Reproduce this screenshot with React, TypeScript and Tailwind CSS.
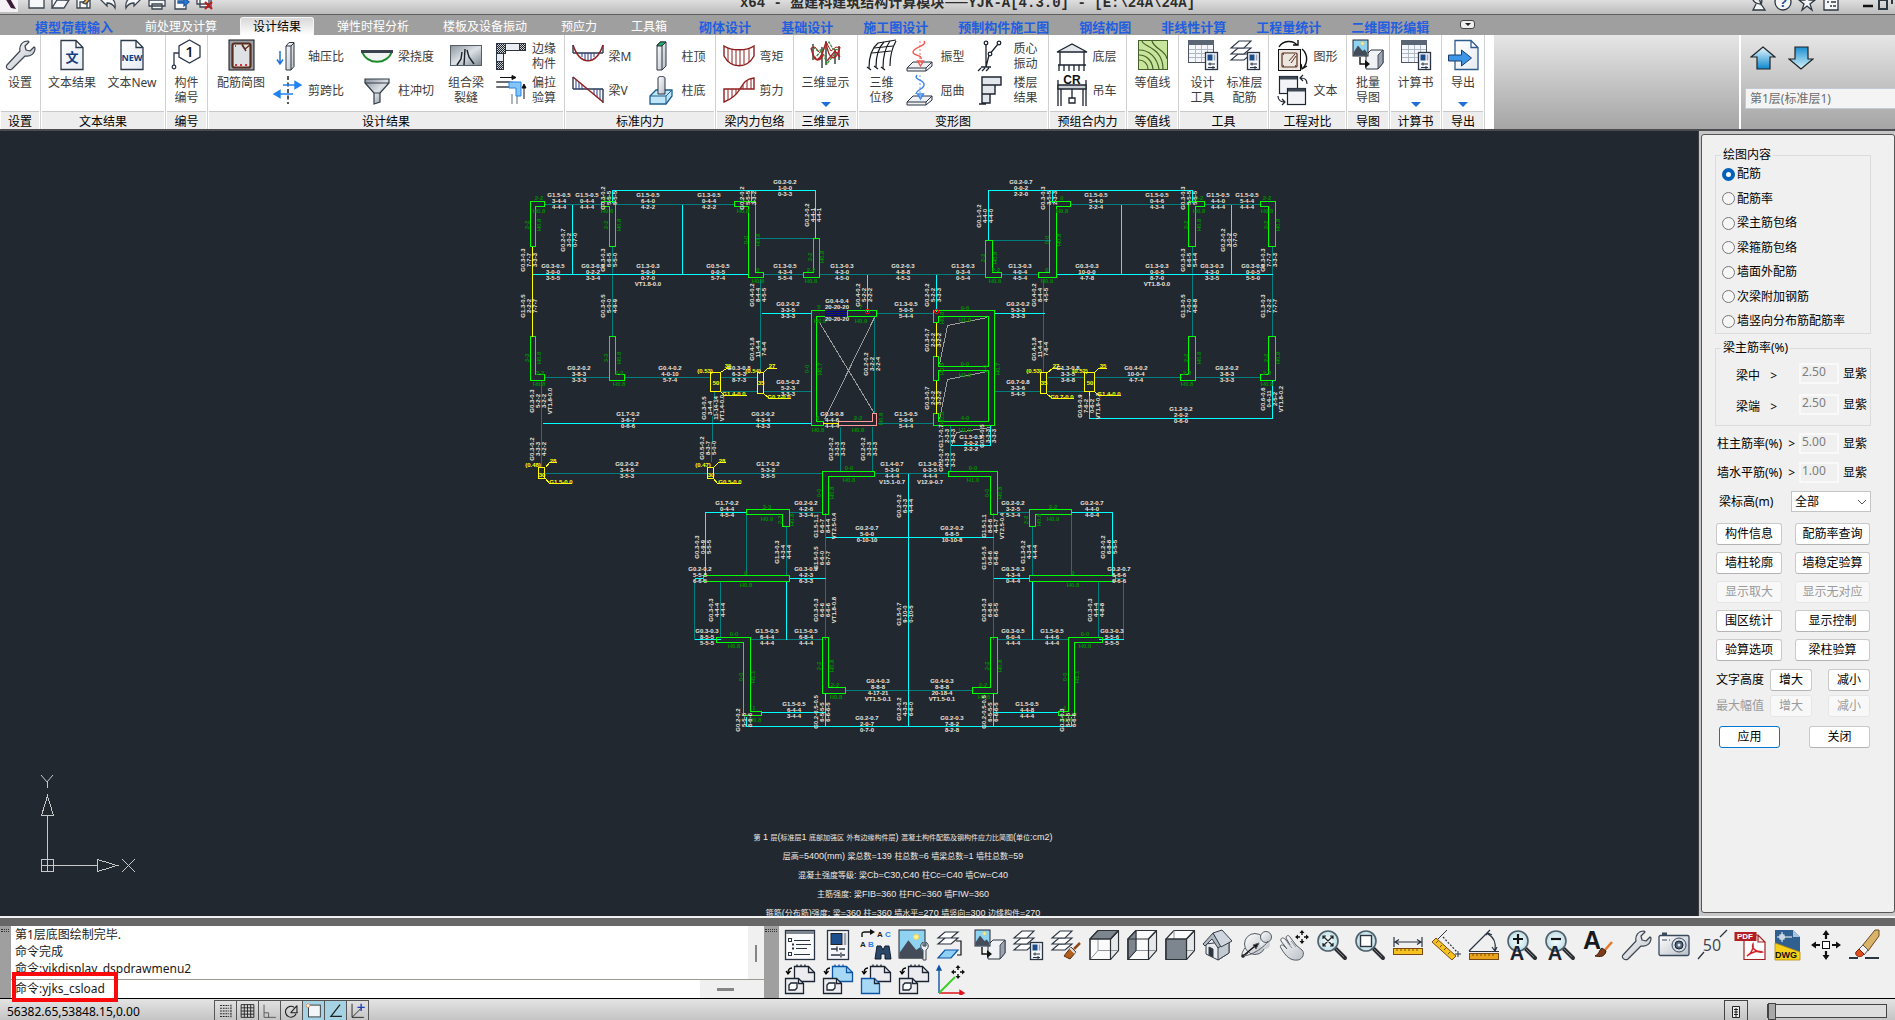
import React, { useState } from 'react';

const INK = '#1b2430';

/* ---------- shared icon parts ---------- */

const Sheet = () => (
  <path d="M5 1.5h15l7 7v22H5z M20 1.5v7h7" fill="url(#paper)" stroke="#2d3a4c" strokeWidth="1.3" />
);

const Layers = () => (
  <g fill="#fff" stroke="#2a3442" strokeWidth="1.1">
    <path d="M2 21l7-6h13l-7 6z" />
    <path d="M2 15l7-6h13l-7 6z" />
    <path d="M2 9l8-7h12l-7 7z" />
  </g>
);

const MiniCard = () => (
  <g>
    <rect x="18.5" y="13.5" width="12" height="17" fill="#f4f6fa" stroke="#2a3442" strokeWidth="1.3" />
    <rect x="20.5" y="15.5" width="5" height="6" fill="#1b4d8c" />
    <path d="M27.5 15.5v6" stroke="#9aa3ae" strokeWidth="1.5" />
    <path d="M21 25h7M23 23.500v3M21 28.500h7M26 27v3" stroke="#2a3442" />
  </g>
);

const Magnifier = ({ children }: { children?: React.ReactNode }) => (
  <g>
    <path d="M20 20l9 9" stroke="#2c2f33" strokeWidth="4" strokeLinecap="round" />
    <path d="M20 20l8 8" stroke="#777c82" strokeWidth="1" />
    <circle cx="12" cy="12" r="10" fill="url(#lens)" stroke="#51606c" strokeWidth="1.6" />
    {children}
  </g>
);

const Cube = ({ face }: { face: 'top' | 'left' | 'front' }) => (
  <g stroke="#2d3237" strokeWidth="1.1" strokeLinejoin="round">
    <path d="M2 10l8-8.500h20.500v20l-8 9H2z" fill="#fbfbfc" />
    <path d="M22.500 10l8-8.500v20l-8 9z" fill="#e6e8ea" />
    <path d="M10 1.500v20M10 21.500h20M10 21.500l-8 9" stroke="#8d9399" fill="none" strokeWidth="1" />
    {face === 'top' && <path d="M2 10l8-8.500h20.500l-8 8.500z" fill="#7d858e" />}
    {face === 'left' && <path d="M2 10l8-8.500v20l-8 9z" fill="#7d858e" />}
    {face === 'front' && <path d="M2 10h20.500v20.500H2z" fill="#7d858e" />}
    <path d="M2 10h20.500v20.500H2zM22.500 10l8-8.500" fill="none" />
  </g>
);

const Viewport = ({ back, front }: { back: string; front: string }) => (
  <g strokeWidth="1.3">
    <path d="M10.500 3.500h14l6 6v9h-20z" fill={back} stroke={back === '#a7d8f5' ? '#0d55a5' : INK} />
    <path d="M24.500 3.500v6h6M13 1.500v2M17 1.500v2M21 1.500v2" fill="none" stroke={back === '#a7d8f5' ? '#0d55a5' : INK} />
    <path d="M1.500 15.500h13l5 5v10h-18z" fill={front} stroke={front === '#a7d8f5' ? '#0d55a5' : INK} />
    <path d="M14.500 15.500v5h5" fill="none" stroke={INK} />
    {front !== '#a7d8f5' && <path d="M5 22l2-2h6v5l-2 2H5z" fill="#fff" stroke={INK} />}
    <path d="M8 5c-3 0-4 2-4 5M2 8l2 3 2.500-3" fill="none" stroke="#000" />
  </g>
);

const MoveArrows = ({ x, y }: { x: number; y: number }) => (
  <g transform={`translate(${x} ${y})`} stroke="#111" fill="#111">
    <path d="M0-5V-2M0 5V2M-5 0H-2M5 0H2" strokeWidth="1.4" />
    <path d="M0-7l2.500 3h-5zM0 7l2.500-3h-5zM-7 0l3-2.500v5zM7 0l-3-2.500v5z" stroke="none" />
  </g>
);

const Landscape = ({ w, h }: { w: number; h: number }) => (
  <g>
    <rect x="1" y="1" width={w} height={h} fill="#8fd3f3" stroke="#20272f" />
    <circle cx={w * 0.7} cy={h * 0.28} r={w * 0.1} fill="#fff3a0" stroke="#f8d34c" />
    <path d={`M1.500 ${h * 0.85}L${w * 0.4} ${h * 0.4}l${w * 0.3} ${h * 0.35} ${w * 0.15}-${h * 0.1} ${w * 0.15} ${h * 0.2}v${h * 0.2}H1.500z`} fill="#434c58" />
  </g>
);

const icons: Record<string, React.ReactNode> = {
  wrench: (
    <path d="M3 26l13-14c-1-5 2-10 8-10l1 1-4 4 1 4 4 1 4-4 1 1c0 6-5 9-10 8L8 30c-3 2-7-1-5-4z" fill="url(#steel)" stroke="#3b444f" strokeWidth="1.2" strokeLinejoin="round" />
  ),
  textDoc: (
    <g>
      <Sheet />
      <text x="16" y="23" textAnchor="middle" fontSize="13" fontWeight="700" fill="#123d80" fontFamily="Noto Sans CJK SC, sans-serif">文</text>
    </g>
  ),
  newDoc: (
    <g>
      <Sheet />
      <text x="16" y="22" textAnchor="middle" fontSize="9" fontWeight="700" fill="#123d80" fontFamily="Open Sans, sans-serif">NEW</text>
    </g>
  ),
  hexNumber: (
    <g fill="none" stroke="#2d3a4c" strokeWidth="1.300">
      <path d="M18.500 1l10.500 6v11l-10.500 6L8 18V7z" fill="#fff" />
      <path d="M8 14H3v12" />
      <circle cx="3" cy="28" r="1.800" fill="#fff" />
      <text x="18.500" y="18" textAnchor="middle" fontSize="15" fontWeight="600" fill="#111" stroke="none" fontFamily="Open Sans, sans-serif">1</text>
    </g>
  ),
  rebar: (
    <g>
      <rect x="4" y="1" width="25" height="30" fill="#99a0a8" stroke="#111" />
      <rect x="7.500" y="4.500" width="18" height="24" rx="2" fill="#dfe2e5" stroke="#5a2d1c" strokeWidth="2.200" />
      <path d="M17 5l3 5 5-4M17 6l4 6" stroke="#5a2d1c" fill="none" strokeWidth="1.400" />
      <path d="M10 26h2M15 26h2M20 26h2M10 7h1" stroke="#d33" strokeWidth="2" />
    </g>
  ),
  axial: (
    <g>
      <path d="M15 6l3-3.500h5v24l-3 3.500h-5z" fill="url(#steel)" stroke="#2a3442" />
      <path d="M20 6v24M15 6h5l3-3" fill="none" stroke="#2a3442" />
      <path d="M9 11v12M6 19.500L9 24l3-4.500" stroke="#1f74d6" strokeWidth="1.500" fill="none" />
    </g>
  ),
  shear: (
    <g>
      <path d="M17 2v28" stroke="#222" strokeWidth="1.500" strokeDasharray="4 2.500" />
      <path d="M12 11h16M30 11l-6-3.500v7zM22 20H7M3 20l6-3.500v7z" stroke="#1f82ef" strokeWidth="1.400" fill="#1f82ef" />
    </g>
  ),
  deflect: (
    <g fill="none">
      <path d="M1 12c6 13 24 13 30 0" stroke="#1c8b2b" strokeWidth="1.800" fill="#f0f4f0" />
      <path d="M0 11.500h32" stroke="#3a424d" strokeWidth="3" />
    </g>
  ),
  punch: (
    <path d="M4 5h24v4L19 19v9l-6 2V19L4 9zM4 9h24M13 19h6" fill="url(#steelDark)" stroke="#333c46" strokeWidth="1.200" />
  ),
  crack: (
    <g>
      <rect x="0.500" y="6.500" width="31" height="20" fill="url(#steelDark)" stroke="#555e69" />
      <path d="M7 26l4-6 1-7M14 26l1-16M24 25l-5-7-2-7" fill="none" stroke="#1a2129" strokeWidth="1.400" />
    </g>
  ),
  edge: (
    <g stroke="#2a3442">
      <rect x="1.500" y="3.500" width="29" height="7" fill="#e9edf2" />
      <rect x="1.500" y="3.500" width="7" height="26" fill="#e9edf2" />
      <rect x="1.500" y="3.500" width="9" height="10" fill="url(#hatch)" />
      <rect x="24.500" y="3.500" width="6" height="7" fill="url(#hatch)" />
      <rect x="1.500" y="21.500" width="7" height="8" fill="url(#hatch)" />
    </g>
  ),
  tension: (
    <g fill="none">
      <path d="M2 8h16v0M2 13h12M22 30V20M17 30V20" stroke="#9aa3ad" strokeWidth="1.600" />
      <path d="M1 8h14M1 13h13" stroke="#222" />
      <path d="M14 8h12v14h-5v-8h-7z" fill="#86c6f4" stroke="#1f82ef" />
      <path d="M5 3.500h16M17 1.500l4 2-4 2zM29 25V11M27 14l2-4 2 4z" stroke="#111" fill="#111" />
    </g>
  ),
  beamM: (
    <g fill="none">
      <path d="M1 5v8M31 5v8M1 13h30" stroke="#2b3a55" strokeWidth="1.400" />
      <path d="M10 13v4M13 13v7M16 13v8M19 13v7M22 13v4" stroke="#2b3a8a" />
      <path d="M1 5c7 21 23 21 30 0" stroke="#8f1f1f" strokeWidth="1.500" />
    </g>
  ),
  beamV: (
    <g fill="none">
      <path d="M1 3v12M31 15v14M1 15h30" stroke="#2b3a55" strokeWidth="1.400" />
      <path d="M4 6v9M7 8v7M10 10v5M22 15v6M25 15v8M28 15v11" stroke="#2b3a8a" />
      <path d="M1 3l30 25" stroke="#8f1f1f" strokeWidth="1.500" />
    </g>
  ),
  colTop: (
    <g stroke="#2a3442">
      <path d="M12 5l3-3h6v24l-4 4h-5z" fill="url(#steel)" />
      <path d="M12 6l3-4h6l-4 4z" fill="#23a867" />
      <path d="M17 6v24" />
    </g>
  ),
  colBot: (
    <g stroke="#1d5f8f">
      <path d="M5 22l6-6h16v6l-6 8H5z" fill="#bfe6f8" strokeWidth="1.300" />
      <path d="M5 22h16l6-6M21 22v8" fill="none" />
      <path d="M13 4c0-2 7-2 7 0v16h-7z" fill="url(#steel)" stroke="#2a3442" />
    </g>
  ),
  moment: (
    <g fill="none" stroke="#8f1f1f" strokeWidth="1.400">
      <path d="M1 6c7 5 23 5 30 0v10c-7 13-23 13-30 0z" />
      <path d="M5 8v14M9 9v15M13 10v15M17 10v16M21 9v15M26 8v14" strokeWidth="1" />
    </g>
  ),
  shearForce: (
    <g fill="none" stroke="#8f1f1f" strokeWidth="1.400">
      <path d="M1 15h30V4c-9 1-11 6-14 11S9 25 1 28z" />
      <path d="M5 15v11M9 15v9M13 15v5M20 11v4M24 7v8M28 5v10" strokeWidth="1" />
    </g>
  ),
  threeD: (
    <g fill="none">
      <path d="M3 5v16M12 8v21M16 2v24M29 7v14M25 10v15" stroke="#1d2a22" strokeWidth="1.300" />
      <path d="M3 8l5 4 5-2 6-7 4 7 6 1M4 20l8-9 5 14 9-12" stroke="#2f8a3a" strokeWidth="1.200" strokeDasharray="3 1" />
      <path d="M1 9c4 16 9 16 15-6 3 20 10 20 14 5M3 16c3 8 8 5 10 0M17 22l8-10 5 6" stroke="#a82222" strokeWidth="1.400" />
      <path d="M1 9l4-1 4 5M16 3l5 9 5-4 4 1" stroke="#a82222" />
    </g>
  ),
  displacement: (
    <g fill="none" stroke="#15191d" strokeWidth="1.200">
      <path d="M3 29C3 18 6 9 12 4M10 28c0-12 3-20 8-25M17 29c0-12 2-20 7-27M24 27c0-10 2-18 6-25" />
      <path d="M12 4l18-3M8 9l19-2M6 14l19-2M1 28l4 3M8 27l4 3M15 28l4 3" />
    </g>
  ),
  vibration: (
    <g fill="none">
      <path d="M3 28l6-6h19l-6 6zM3 28v3h19v-3M22 31l6-5v-4" fill="#eef0f3" stroke="#2a3442" />
      <path d="M16 1v24" stroke="#f19a92" strokeDasharray="2 2" strokeWidth="1.400" />
      <path d="M20 1c4 5-11 6-11 11 0 4 10 3 8 7M13.500 21l3 5 3-5z" stroke="#ee5a50" fill="none" strokeWidth="1.400" />
    </g>
  ),
  buckling: (
    <g fill="none">
      <path d="M3 28l6-6h19l-6 6zM3 28v3h19v-3M22 31l6-5v-4" fill="#eef0f3" stroke="#2a3442" />
      <path d="M16 1v24" stroke="#8fbcf5" strokeDasharray="2 2" strokeWidth="1.400" />
      <path d="M13 1c-4 5 8 5 7 10 0 4-8 5-8 9M13.500 20l3 5 3-5z" stroke="#3b86ea" fill="none" strokeWidth="1.400" />
    </g>
  ),
  mass: (
    <g fill="none" stroke="#1c2430" strokeWidth="1.300">
      <path d="M9 3v24M9 27l3-12 9-11M4 27h10M5 31l3-3M9 31l3-3M1 31l3-3" />
      <circle cx="9" cy="3" r="1.800" fill="#fff" /><circle cx="13" cy="14" r="1.800" fill="#fff" /><circle cx="22" cy="3" r="1.800" fill="#fff" />
    </g>
  ),
  storey: (
    <g fill="#e3e6ea" stroke="#1c2430" strokeWidth="1.400">
      <path d="M5 3h19v8H5zM5 11h13v9H5zM5 20h8v9H5M5 3v27M2 30h7" />
    </g>
  ),
  baseLoad: (
    <g fill="none" stroke="#1c2430" strokeWidth="1.300">
      <path d="M1 12L16 4l15 8zM4 12v13M28 12v13M2 25h28" fill="#e3e6ea" />
      <path d="M3 25v6M8 25v6M13 25v6M18 25v6M23 25v6M28 25v6" />
    </g>
  ),
  crane: (
    <g fill="none" stroke="#1c2430" strokeWidth="1.300">
      <path d="M2 6v26M5 13v19M30 6v26M27 13v19" />
      <path d="M2 11h28v4H2z" fill="#c9ced4" />
      <path d="M16 15v9M13 24h6v5h-6z" />
      <text x="16" y="10" textAnchor="middle" fontSize="12" fontWeight="700" fill="#111" stroke="none" fontFamily="Liberation Sans, sans-serif">CR</text>
    </g>
  ),
  contour: (
    <g>
      <rect x="1.500" y="1.500" width="29" height="29" fill="#c7e59b" stroke="#47612b" />
      <path d="M2 21c5 0 9 4 9 9M2 16c8 0 13 6 14 14M2 11c11 0 18 8 20 19M5 2c1 6 21 6 21 28M15 2c2 8 14 9 15 18" fill="none" stroke="#47612b" strokeWidth="1.200" />
    </g>
  ),
  tableCard: (
    <g>
      <rect x="1.500" y="1.500" width="25" height="22" fill="#f5f7fa" stroke="#4d5763" />
      <rect x="1" y="1" width="26" height="5" fill="#5b6675" />
      <path d="M2 10.500h24M2 14.500h24M2 18.500h24M8.500 6v17M14.500 6v17M20.500 6v17" stroke="#aeb9c6" />
      <MiniCard />
    </g>
  ),
  layersCard: <g><Layers /><MiniCard /></g>,
  compareShape: (
    <g>
      <rect x="1.500" y="9.500" width="22" height="21" fill="#ebe6df" stroke="#111" />
      <rect x="5" y="13" width="15" height="14" rx="1" fill="none" stroke="#5a2d1c" strokeWidth="1.200" />
      <path d="M12 21l6-7M14 23l5-7" stroke="#5a2d1c" />
      <path d="M6 14h1M6 26h1M18 26h1" stroke="#c22" strokeWidth="2" />
      <path d="M2 7C6 0 16 0 20 5M16 5h5V0M25 9c6 5 6 14 1 19M30 26l-5 3-1-5" fill="none" stroke="#111" strokeWidth="1.400" />
    </g>
  ),
  compareText: (
    <g stroke="#1c2430" strokeWidth="1.200">
      <rect x="2.500" y="2.500" width="18" height="17" fill="#f2f3f6" />
      <path d="M3 4h17" stroke="#3c4654" strokeWidth="3" />
      <rect x="10.500" y="14.500" width="18" height="16" fill="#f2f3f6" />
      <path d="M11 16h17" stroke="#3c4654" strokeWidth="3" />
      <path d="M30 10c0-4-2-6-6-6M26 1l-3 3 3 3M1 22c0 3 2 6 6 6M5 25l3 3-3 3" fill="none" />
    </g>
  ),
  pictureCube: (
    <g>
      <path d="M14 16l5-5h12v13l-5 6H14z" fill="#f0f2f5" stroke="#2a3442" />
      <path d="M26 16l5-5v13l-5 6z" fill="#9ba3ad" stroke="#2a3442" strokeWidth="0.800" />
      <Landscape w={15} h={16} />
      <path d="M8 18v7h7" fill="none" stroke="#111" strokeWidth="1.400" />
      <path d="M13 21l5 4-5 4z" fill="#111" />
    </g>
  ),
  exportDoc: (
    <g>
      <path d="M8 1.500h16l7 7v22H8z M24 1.500v7h7" fill="url(#paper)" stroke="#2d5d8c" strokeWidth="1.300" />
      <path d="M1.500 16h13v-5l10 8-10 8v-5h-13z" fill="#3d95e8" stroke="#17406f" />
    </g>
  ),
  list: (
    <g stroke="#2a3442">
      <rect x="1.500" y="1.500" width="29" height="29" fill="#fafbfc" strokeWidth="1.300" />
      <rect x="2" y="2" width="28" height="3" fill="#7d868f" stroke="none" />
      <rect x="4.500" y="9.500" width="3" height="3" fill="#fff" /><rect x="4.500" y="23.500" width="3" height="3" fill="#fff" />
      <path d="M10 11.500h16M12 15.500h15M12 19.500h11M10 25.500h16" /><path d="M8 15.500h2M8 19.500h2" strokeWidth="2" />
    </g>
  ),
  card: (
    <g>
      <rect x="5.500" y="1.500" width="21" height="29" fill="#f4f6fa" stroke="#2a3442" strokeWidth="1.300" />
      <rect x="9" y="4.500" width="11" height="11" fill="#1d4f8f" stroke="#222" />
      <path d="M23 4v12" stroke="#9aa3ae" strokeWidth="2.500" />
      <path d="M9 20h6M17 20h6M15 17.500v5M9 26h9M20 26h3M19 23.500v5" stroke="#2a3442" strokeWidth="1.300" />
    </g>
  ),
  find: (
    <g>
      <path d="M2 8V5c0-2 1-2 3-2h6" fill="none" stroke="#111" strokeWidth="1.400" /><path d="M10 0l5 3-5 3z" fill="#111" />
      <g fontSize="8" fontWeight="700" fontFamily="Liberation Sans, sans-serif">
        <text x="17" y="8" fill="#222">A</text><text x="25" y="8" fill="#1f82ef">C</text>
        <text x="0" y="18" fill="#222">A</text><text x="8" y="18" fill="#1f82ef">B</text>
      </g>
      <path d="M15 30l2-13h4l2 4 2-4h4l2 13h-6v-5h-4v5z" fill="#2c4869" stroke="#0f1c2c" />
    </g>
  ),
  pictureWrench: (
    <g>
      <Landscape w={26} h={28} />
      <path d="M25 31V21c-3-2-3-6 0-8v4h3v-4c3 2 3 6 0 8v10z" fill="#e8ebef" stroke="#3b444f" />
    </g>
  ),
  layerMove: (
    <g fill="#fff" stroke="#2a3442" strokeWidth="1.200">
      <path d="M2 15l7-6h13l-7 6zM2 9l7-6h13l-7 6z" />
      <path d="M2 29l7-8h13l-7 8z" fill="#8fd0f5" stroke="#0d55a5" />
      <path d="M20 12h5v14h-4" fill="none" stroke="#111" />
    </g>
  ),
  layerBrush: (
    <g>
      <Layers />
      <path d="M30 14l-6 6" stroke="#8f4a1c" strokeWidth="2.500" />
      <path d="M21 18l5 5-6 7-6-3z" fill="#b2611e" stroke="#5a2d0c" />
      <path d="M20 19l5 5" stroke="#dbe0e6" strokeWidth="2" />
    </g>
  ),
  cubeTop: <Cube face="top" />,
  cubeLeft: <Cube face="left" />,
  cubeFront: <Cube face="front" />,
  house: (
    <g stroke="#353d47" strokeLinejoin="round">
      <path d="M4 15v10l12 6 11-7V12z" fill="#e9ecef" />
      <path d="M16 18v13l11-7V12z" fill="#c4cad1" />
      <path d="M1 15L11 4l8 13-3 2-6-9-7 7z" fill="#aeb6bf" />
      <path d="M11 4l9-3 10 11-11 6z" fill="#cfd6dd" />
      <path d="M7 18l4 2v8l-4-2z" fill="#2c3540" />
    </g>
  ),
  orbit: (
    <g fill="url(#steel)" stroke="#565d64">
      <path d="M8 24C3 30-1 27 5 19" fill="none" />
      <circle cx="15" cy="15" r="10.500" /><circle cx="25" cy="15" r="5" stroke="none" /><circle cx="26" cy="8" r="5.500" />
      <path d="M3 27c8 0 22-9 25-15" fill="none" />
      <path d="M3 27l12-10" stroke="#111" strokeWidth="1.500" /><path d="M19 14l-6 2 3 4z" fill="#111" />
      <circle cx="3" cy="27" r="1.500" fill="#111" />
    </g>
  ),
  pan: (
    <g>
      <path d="M3 19c-2-3 1-4 3-2l3 3-6-8c-1-3 2-4 4-2l5 6-4-7c0-3 3-3 4-1l6 8 6 5c3 3 1 9-4 10-7 1-12-3-17-12z" fill="url(#steel)" stroke="#565d64" />
      <path d="M9 13l5 6M13 12l5 6" stroke="#8b9198" fill="none" />
      <MoveArrows x={24} y={8} />
    </g>
  ),
  zoomAll: <Magnifier><path d="M7 7l10 10M17 7L7 17M7 10V7h3M14 7h3v3M17 14v3h-3M10 17H7v-3" fill="none" stroke="#222" strokeWidth="1.200" /></Magnifier>,
  zoomWindow: <Magnifier><rect x="6.500" y="6.500" width="11" height="11" fill="#fff" stroke="#2b3440" strokeWidth="1.400" /></Magnifier>,
  ruler: (
    <g>
      <path d="M2 8v10M30 8v10M3 13h26M7 10.500L3 13l4 2.500M25 10.500l4 2.500-4 2.500" stroke="#2a3442" fill="none" strokeWidth="1.200" />
      <rect x="1.500" y="19.500" width="29" height="6" fill="#f4c320" stroke="#7a4a12" />
      <path d="M5 20v2M9 20v2M13 20v2M17 20v2M21 20v2M25 20v2" stroke="#7a4a12" />
    </g>
  ),
  rulerDiagonal: (
    <g>
      <path d="M13 8l14 15" stroke="#2a3442" strokeWidth="1.200" strokeDasharray="2 1.500" fill="none" /><path d="M28 22v6M25 25h6M8 10L17 1" stroke="#2a3442" />
      <path d="M2 13l4-4 20 18-4 4z" fill="#f4c320" stroke="#7a4a12" />
      <path d="M8 12l-2 2M12 16l-2 2M16 19l-2 2M20 23l-2 2" stroke="#7a4a12" />
    </g>
  ),
  angle: (
    <g>
      <path d="M1 22.500h30M1 22L22 1M20 5c7 4 8 10 7 16M18 6l2-2 4 2M24 18l3 4 2-4" stroke="#2a3442" fill="none" strokeWidth="1.200" />
      <rect x="1.500" y="24.500" width="29" height="6" fill="#eaa51e" stroke="#7a4a12" />
      <path d="M5 25v2M9 25v2M13 25v2M17 25v2M21 25v2M25 25v2" stroke="#7a4a12" />
    </g>
  ),
  textBigger: (
    <Magnifier>
      <path d="M12 5v10M7 10h10" stroke="#111" strokeWidth="2.200" />
      <text x="11" y="31" textAnchor="middle" fontSize="20" fontWeight="700" fill={INK} fontFamily="Liberation Sans, sans-serif">A</text>
    </Magnifier>
  ),
  textSmaller: (
    <Magnifier>
      <path d="M7 10h10" stroke="#111" strokeWidth="2.200" />
      <text x="11" y="31" textAnchor="middle" fontSize="20" fontWeight="700" fill={INK} fontFamily="Liberation Sans, sans-serif">A</text>
    </Magnifier>
  ),
  textStyle: (
    <g>
      <text x="10" y="20" textAnchor="middle" fontSize="25" fontWeight="700" fill="#161a1f" fontFamily="Liberation Sans, sans-serif">A</text>
      <path d="M30 13l-7 8" stroke="#e37a2c" strokeWidth="2.500" />
      <path d="M20 19l4 3c-1 6-6 6-11 5 4-1 4-6 7-8z" fill="#7e3d1a" stroke="#3a1b08" />
    </g>
  ),
  camera: (
    <g>
      <rect x="1" y="6.500" width="30" height="20" rx="1.500" fill="url(#steel)" stroke="#38495c" strokeWidth="1.300" />
      <path d="M4 5h5" stroke="#38495c" strokeWidth="3" />
      <circle cx="21" cy="16" r="7" fill="#d5dbe2" stroke="#38495c" />
      <circle cx="21" cy="16" r="4" fill="#55677c" stroke="#18222e" />
      <circle cx="21" cy="16" r="1.500" fill="#dfe9f5" />
      <path d="M4 11h5M11 11h1" stroke="#38495c" />
    </g>
  ),
  fifty: (
    <g>
      <path d="M2 30l6-7M24 8l7-7" stroke="#2a3442" strokeWidth="1.300" />
      <text x="16" y="22" textAnchor="middle" fontSize="16" fill="#39424e" fontFamily="Open Sans, sans-serif">50</text>
    </g>
  ),
  pdf: (
    <g>
      <path d="M10 6h14l7 7v17.500H10z M24 6v7h7" fill="#fff" stroke="#a02020" strokeWidth="1.200" />
      <path d="M0.500 3h22v9h-22z" fill="#b11f24" />
      <text x="11" y="10" textAnchor="middle" fontSize="8" fontWeight="700" fill="#fff" fontFamily="Liberation Sans, sans-serif">PDF</text>
      <path d="M13 27c4-2 7-8 6-12-2 4 4 9 9 8-5-2-11 1-15 4z" fill="none" stroke="#d3232a" strokeWidth="1.500" />
    </g>
  ),
  dwg: (
    <g>
      <path d="M3 1h18l7 7v22H3z" fill="#2f6090" />
      <path d="M21 1v7h7z" fill="#a9c4de" />
      <path d="M3 14l25 9v8H3z" fill="#f8d01c" stroke="#b58a0b" strokeWidth="0.800" />
      <path d="M10 3v10M5 8h15" stroke="#fff" /><rect x="8" y="6" width="4" height="4" fill="none" stroke="#fff" />
      <text x="14" y="29" textAnchor="middle" fontSize="9" fontWeight="700" fill="#111" fontFamily="Liberation Sans, sans-serif">DWG</text>
    </g>
  ),
  move: (
    <g stroke="#111" fill="#111">
      <path d="M16 10V5M16 22v5M10 16H5M22 16h5" strokeWidth="2.200" />
      <path d="M16 1l3.500 5h-7zM16 31l3.500-5h-7zM1 16l5-3.500v7zM31 16l-5-3.500v7z" stroke="none" />
      <rect x="12.500" y="12.500" width="7" height="7" fill="#fff" />
    </g>
  ),
  eraser: (
    <g>
      <path d="M1 29h9M17 29h14" stroke="#2e3640" strokeWidth="2.200" />
      <path d="M14 17L27 1h4v6L20 22z" fill="#d9b36a" stroke="#6a4a1c" />
      <path d="M11 20l4-4 5 5-4 5z" fill="#f3f3f3" stroke="#555" />
      <path d="M11 20l5 5c-3 5-10 2-8-2z" fill="#e04e1c" stroke="#7a2408" />
    </g>
  ),
  viewA: <Viewport back="#ececf0" front="#ececf0" />,
  viewB: <Viewport back="#a7d8f5" front="#ececf0" />,
  viewC: <Viewport back="#ececf0" front="#a7d8f5" />,
  ucs: (
    <g>
      <path d="M3 30V6M3 3l-2 4h4z" stroke="#0d55a5" fill="#0d55a5" strokeWidth="1.400" />
      <path d="M3 30h22M28 30l-4-2.500v5z" stroke="#e0141c" fill="#e0141c" strokeWidth="1.400" />
      <path d="M3 30l16-16" stroke="#36cf21" strokeWidth="1.800" />
      <MoveArrows x={22} y={9} />
    </g>
  ),
};

const Icon = ({ name }: { name: string }) => (
  <svg viewBox="0 0 32 32" className="size-8 shrink-0" aria-hidden="true">{icons[name]}</svg>
);

/* ---------- ribbon ---------- */

const Lines = ({ lines }: { lines: string[] }) => (
  <span className="leading-[15px] whitespace-nowrap text-[#3c3c3c]">
    {lines.map((l) => <span key={l} className="block">{l}</span>)}
  </span>
);

const Big = ({ icon, lines, width, arrow }: { icon: string; lines: string[]; width: string; arrow?: boolean }) => (
  <button className={`flex shrink-0 flex-col items-center gap-1 pt-1 text-center ${width}`}>
    <Icon name={icon} />
    <Lines lines={lines} />
    {arrow && (
      <svg viewBox="0 0 10 5" className="mt-2 h-[5px] w-[10px]"><path d="M0 0h10l-5 5z" fill="#1f6fd6" /></svg>
    )}
  </button>
);

const Small = ({ icon, lines }: { icon: string; lines: string[] }) => (
  <button className="flex h-[34px] items-center gap-[5px] text-left">
    <Icon name={icon} />
    <Lines lines={lines} />
  </button>
);

const Stack = ({ width, children }: { width: string; children: React.ReactNode }) => (
  <div className={`flex shrink-0 flex-col pt-1 ${width}`}>{children}</div>
);

const Group = ({ title, width, children }: { title: string; width: string; children: React.ReactNode }) => (
  <section className={`flex shrink-0 flex-col border-r border-[#d2d2d2] bg-white pr-px pl-px ${width}`}>
    <div className="flex flex-1 justify-center">{children}</div>
    <h2 className="h-[18px] border-t border-[#c9c9c9] bg-[#ededed] text-center leading-5 text-black">{title}</h2>
  </section>
);

const tabs: [string, boolean][] = [
  ['模型荷载输入', true], ['前处理及计算', false], ['设计结果', false], ['弹性时程分析', false],
  ['楼板及设备振动', false], ['预应力', false], ['工具箱', false], ['砌体设计', true], ['基础设计', true],
  ['施工图设计', true], ['预制构件施工图', true], ['钢结构图', true], ['非线性计算', true],
  ['工程量统计', true], ['二维图形编辑', true],
];

function TitleBar() {
  return (
    <header className="flex h-[15px] shrink-0 items-end overflow-hidden border-b border-[#5e5e5e] bg-linear-to-b from-[#dedede] to-[#bcbcbc]">
      <div className="grid h-6 w-full grid-cols-[1fr_auto_1fr] items-center">
        <svg viewBox="0 0 216 24" className="h-6 w-[216px]" fill="#f7f8fa" stroke="#3a4450" strokeWidth="1.300">
          <rect x="0" y="0" width="18" height="22" fill="#f4f2f4" stroke="none" />
          <path d="M2 3l6 2 8 14-5-1z" fill="#3c1a38" stroke="none" />
          <path d="M29 4h11l4 4v10H29z" />
          <path d="M52 18V6h5l2 2h7v3M52 18l5-8h12l-5 8z" />
          <path d="M77 4h13v14H77zM80 12h7v6h-7z" /><path d="M83 13l8-10 3 2-8 9z" fill="#f2b13c" />
          <path d="M101 10l6-5v3c6 0 9 3 8 10-2-4-4-5-8-5v3z" />
          <path d="M140 10l-6-5v3c-6 0-9 3-8 10 2-4 4-5 8-5v3z" />
          <path d="M149 10h16v6h-16zM152 5h10v5h-10zM152 14h10v5h-10z" />
          <path d="M175 4h11v15h-11z" /><path d="M178 11h6v-3l5 4-5 4v-3h-6z" fill="#2f7fdd" stroke="#1f5ca8" />
          <path d="M197 4h12v10h-12zM200 8h11v9h-11z" /><path d="M205 12l7 7M212 12l-7 7" stroke="#c31818" strokeWidth="2" />
        </svg>
        <h1 className="pl-10 text-[14px] leading-5 font-bold whitespace-nowrap text-[#2d2d2d] [font-family:'Liberation_Mono','Noto_Sans_CJK_SC',monospace]">
          x64 - 盈建科建筑结构计算模块<span className="[font-family:'Noto_Sans_CJK_SC',sans-serif]">——</span>YJK-A[4.3.0] - [E:\24A\24A]
        </h1>
        <svg viewBox="0 0 146 24" className="h-6 w-[146px] justify-self-end" fill="#f5f6f8" stroke="#2d3742" strokeWidth="1.300">
          <path d="M3 7c1 5 4 7 9 7M12 14c2-3 0-8-3-9zM7 14l-3 6h12l-4-6" />
          <circle cx="34" cy="12" r="8" />
          <text x="34" y="17" textAnchor="middle" fontSize="14" fontWeight="700" fill="#1f4f9c" stroke="none" fontFamily="Liberation Sans, sans-serif">?</text>
          <path d="M58 4l2 6h6l-5 4 2 6-5-4-5 4 2-6-5-4h6z" />
          <path d="M75 4h14v16H75zM78 8h2M78 12h2M81 16h2M82 8h5M82 12h5M84 16h3" />
          <path d="M114 16h10" stroke="#111" strokeWidth="2.500" />
          <path d="M134 6h9v8M130 10h8v9h-8z" fill="none" strokeWidth="2" />
        </svg>
      </div>
    </header>
  );
}

function TabBar() {
  return (
    <nav className="flex h-5 shrink-0 items-end bg-[#9f9f9f] pl-5 text-[12px]">
      {tabs.map(([name, module]) => {
        if (module) return <button key={name} className="h-[18px] px-[15px] text-[13px] leading-5 font-bold whitespace-nowrap text-[#1f5fe0]">{name}</button>;
        if (name === '设计结果') return <button key={name} className="mx-[6px] h-[18px] rounded-t-[3px] border border-b-0 border-[#f4f4f4] bg-linear-to-b from-[#d8d8d8] to-white px-3 leading-[18px] whitespace-nowrap text-black">{name}</button>;
        return <button key={name} className="h-[18px] px-[17px] leading-5 whitespace-nowrap text-white">{name}</button>;
      })}
      <button aria-label="更多" className="mb-[6px] ml-4 flex h-[9px] w-[15px] items-center justify-center rounded-[3px] border border-[#444] bg-[#eee]">
        <svg viewBox="0 0 6 3" className="h-[3px] w-[6px]"><path d="M0 0h6L3 3z" fill="#222" /></svg>
      </button>
    </nav>
  );
}

function Ribbon() {
  return (
    <div className="flex h-[94px] shrink-0 bg-linear-to-b from-[#e6e6e6] to-[#a5a5a5] text-[12px]">
      <Group title="设置" width="w-[41px]"><Big icon="wrench" lines={['设置']} width="w-10" /></Group>
      <Group title="文本结果" width="w-[125px]">
        <Big icon="textDoc" lines={['文本结果']} width="w-[58px]" />
        <Big icon="newDoc" lines={['文本New']} width="w-[62px]" />
      </Group>
      <Group title="编号" width="w-[42px]"><Big icon="hexNumber" lines={['构件', '编号']} width="w-10" /></Group>
      <Group title="设计结果" width="w-[357px]">
        <Big icon="rebar" lines={['配筋简图']} width="w-[60px]" />
        <Stack width="w-[90px]"><Small icon="axial" lines={['轴压比']} /><Small icon="shear" lines={['剪跨比']} /></Stack>
        <Stack width="w-[82px]"><Small icon="deflect" lines={['梁挠度']} /><Small icon="punch" lines={['柱冲切']} /></Stack>
        <Big icon="crack" lines={['组合梁', '裂缝']} width="w-[46px]" />
        <Stack width="w-[72px] pl-[6px]"><Small icon="edge" lines={['边缘', '构件']} /><Small icon="tension" lines={['偏拉', '验算']} /></Stack>
      </Group>
      <Group title="标准内力" width="w-[151px]">
        <Stack width="w-[73px]"><Small icon="beamM" lines={['梁M']} /><Small icon="beamV" lines={['梁V']} /></Stack>
        <Stack width="w-[64px]"><Small icon="colTop" lines={['柱顶']} /><Small icon="colBot" lines={['柱底']} /></Stack>
      </Group>
      <Group title="梁内力包络" width="w-[78px]">
        <Stack width="w-[64px]"><Small icon="moment" lines={['弯矩']} /><Small icon="shearForce" lines={['剪力']} /></Stack>
      </Group>
      <Group title="三维显示" width="w-[64px]"><Big icon="threeD" lines={['三维显示']} width="w-[60px]" arrow /></Group>
      <Group title="变形图" width="w-[191px]">
        <Big icon="displacement" lines={['三维', '位移']} width="w-[44px]" />
        <Stack width="w-[73px]"><Small icon="vibration" lines={['振型']} /><Small icon="buckling" lines={['屈曲']} /></Stack>
        <Stack width="w-[70px]"><Small icon="mass" lines={['质心', '振动']} /><Small icon="storey" lines={['楼层', '结果']} /></Stack>
      </Group>
      <Group title="预组合内力" width="w-[78px]">
        <Stack width="w-[64px]"><Small icon="baseLoad" lines={['底层']} /><Small icon="crane" lines={['吊车']} /></Stack>
      </Group>
      <Group title="等值线" width="w-[52px]"><Big icon="contour" lines={['等值线']} width="w-[48px]" /></Group>
      <Group title="工具" width="w-[90px]">
        <Big icon="tableCard" lines={['设计', '工具']} width="w-[42px]" />
        <Big icon="layersCard" lines={['标准层', '配筋']} width="w-[42px]" />
      </Group>
      <Group title="工程对比" width="w-[78px]">
        <Stack width="w-[62px]"><Small icon="compareShape" lines={['图形']} /><Small icon="compareText" lines={['文本']} /></Stack>
      </Group>
      <Group title="导图" width="w-[43px]"><Big icon="pictureCube" lines={['批量', '导图']} width="w-10" /></Group>
      <Group title="计算书" width="w-[52px]"><Big icon="tableCard" lines={['计算书']} width="w-12" arrow /></Group>
      <Group title="导出" width="w-[43px]"><Big icon="exportDoc" lines={['导出']} width="w-10" arrow /></Group>
      <div className="w-[9px] shrink-0 bg-white" />
      <div className="ml-auto flex w-[156px] shrink-0 flex-col border-l-2 border-white pl-1">
        <div className="flex gap-3 pt-[11px] pl-[5px]">
          <button aria-label="上一层">
            <svg viewBox="0 0 26 24" className="h-6 w-[26px]"><path d="M13 1l12 10h-5v12H7V11H1z" fill="url(#arrowUp)" stroke="#222" strokeWidth="1.200" /></svg>
          </button>
          <button aria-label="下一层">
            <svg viewBox="0 0 26 24" className="h-6 w-[26px]"><path d="M13 23L1 13h6V1h13v12h5z" fill="url(#arrowDown)" stroke="#222" strokeWidth="1.200" /></svg>
          </button>
        </div>
        <select aria-label="楼层" className="mt-[18px] h-[21px] w-full appearance-none border border-r-0 border-[#c3c9d4] bg-[#f4f4f4] pl-1 text-[12px] text-[#6d6d6d]">
          <option>第1层(标准层1)</option>
        </select>
      </div>
    </div>
  );
}

/* ---------- drawing ---------- */

const cyan = `M613 203V191H816V239M752 191V203M573 205V275M683 205V275M533 275H749M762 314H812M543 424H812M868 275V312
M989 241V191H1193V203M1053 191V203M1122 205V275M1232 205V275M1057 275H1273M995 314H1045M937 275V312M1090 396V419H1273V381M951 446H991V426
M909 474V727M826 538H994M706 576V513H747M1072 513H1113V576M790 579H826M994 579H1030M787 582V640M1033 582V640M695 640H721M1099 640H1124
M762 713H826M994 713H1059M747 717V727H1072V717M826 694V727M994 694V727M695 579H704`;

const teal = `M545 205H602M616 205H735M756 239H813M764 275H804M820 275H986M613 247V337M761 279V373M545 378H610M625 378H711M721 378H758
M721 392H758M764 392H812M542 381V468M546 474H708M714 474H822M715 393L713 424L712 463M877 314H934M875 318V414M878 424H934M841 427V471M873 427V471M876 474H948
M1071 205H1189M1205 205H1261M993 241H1051M1002 275H1039M1044 279V373M1193 247V337M1273 247V337M1048 378H1085M1095 378H1182M1196 378H1261
M995 392H1041M1048 392H1085M951 426V471M790 513H823M998 513H1030M747 515V576M787 527V576M1033 527V576M1072 515V576M826 513V640M994 513V640
M695 579V640M1124 579V640M721 582V638M1099 582V638M751 640H823M998 640H1069M846 691H973M1115 579H1124`;

const walls = `M531 202H545V207H536V247H531ZM602 202H616V247H610V207H602ZM735 202H756V273H764V278H749V207H735ZM814 239H820V278H804V273H814Z
M531 337H536V375H545V381H531ZM610 337H616V375H625V381H610ZM825 311H812V426H824V422H817V317H825M848 311H877V317H848Z
M823 472H875V477H829V515H823ZM986 241H993V273H1002V278H986ZM1071 202H1050V273H1039V278H1057V207H1071ZM1189 202H1205V207H1196V247H1189Z
M1261 202H1276V247H1269V207H1261ZM1269 337H1276V381H1261V375H1269ZM1189 337H1196V381H1181V375H1189Z
M934 311H995V426H934V414H939V422H989V371H939V381H934V357H939V367H989V317H939V323H934Z
M747 510H790V527H783V515H747ZM1030 510H1072V515H1036V527H1030ZM949 472H998V515H991V477H949ZM704 576H790V582H704ZM1030 576H1116V582H1030Z
M823 638H829V688H846V694H823ZM991 638H998V694H973V688H991ZM717 638H751V712H762V716H744V643H717ZM1103 638H1069V712H1059V716H1075V643H1103Z`;

const columns = `M711 373H721V392H711ZM758 373H764V394H758ZM539 468H545V479H539ZM708 468H714V479H708ZM1041 373H1047V394H1041ZM1085 373H1095V392H1085Z
M721 373L727 369H731M721 392L725 396H747M764 373L768 369H777M764 394L770 399H791M546 468L550 463H557M546 479L550 484H572
M714 468L719 463H726M714 479L718 484H741M1048 373L1053 369H1062M1047 394L1053 399H1074M1095 373L1099 369H1107M1095 392L1099 396H1121
M533 247V337M823 424H839M937 323V357M937 381V414M1090 392V396`;

type Label = [number, number, ...string[]];

// beam results: centre x, first line y, then the lines of the block
const across: Label[] = [
  [559, 195, 'G1.5-0.5', '3-4-4', '4-4-4'], [587, 195, 'G1.5-0.5', '0-4-4', '4-4-4'], [648, 195, 'G1.5-0.5', '6-4-0', '4-2-2'],
  [709, 195, 'G1.3-0.5', '0-4-4', '4-2-2'], [785, 182, 'G0.2-0.2', '1-0-0', '0-3-3'], [553, 266, 'G0.3-0.5', '3-0-0', '3-5-5'],
  [593, 266, 'G0.3-0.5', '0-2-2', '3-3-4'], [648, 266, 'G1.3-0.3', '5-0-0', '0-7-0', 'VT1.8-0.0'], [718, 266, 'G0.5-0.5', '0-0-5', '5-7-4'],
  [785, 266, 'G1.3-0.5', '4-3-4', '5-5-4'], [842, 266, 'G1.3-0.3', '4-3-0', '4-5-0'], [903, 266, 'G0.2-0.3', '4-8-8', '4-5-3'],
  [788, 304, 'G0.2-0.2', '3-3-5', '3-3-3'], [837, 301, 'G0.4-0.4', '20-20-20', '', '20-20-20'], [906, 304, 'G1.3-0.5', '5-0-5', '5-4-4'],
  [579, 368, 'G0.2-0.2', '3-8-3', '3-3-3'], [670, 368, 'G0.4-0.2', '4-0-10', '5-7-4'], [739, 368, 'G0.3-0.8', '6-3-3', '8-7-3'],
  [788, 382, 'G0.5-0.2', '5-2-3', '3-3-3'], [628, 414, 'G1.7-0.2', '3-6-7', '0-6-6'], [763, 414, 'G0.2-0.2', '4-3-4', '4-3-3'],
  [832, 414, 'G0.8-0.8', '4-4-6', '4-4-4'], [906, 414, 'G1.5-0.5', '5-0-6', '5-4-4'], [627, 464, 'G0.2-0.2', '3-4-5', '3-5-3'],
  [768, 464, 'G1.7-0.2', '5-3-2', '3-5-5'], [892, 464, 'G1.4-0.7', '5-3-0', '4-4-4', 'V15.1-0.7'],
  [1021, 182, 'G0.2-0.7', '0-0-2', '2-2-0'], [1096, 195, 'G1.5-0.5', '5-4-0', '2-2-4'], [1157, 195, 'G1.5-0.5', '0-4-6', '4-3-4'],
  [1218, 195, 'G1.5-0.5', '4-4-0', '4-4-4'], [1247, 195, 'G1.5-0.5', '5-4-4', '4-4-4'], [963, 266, 'G1.3-0.3', '0-3-4', '0-5-4'],
  [1020, 266, 'G1.3-0.3', '4-0-4', '4-5-4'], [1087, 266, 'G0.3-0.3', '10-0-0', '4-7-8'], [1157, 266, 'G1.3-0.3', '0-0-5', '8-7-0', 'VT1.8-0.0'],
  [1212, 266, 'G0.3-0.3', '4-3-0', '3-3-5'], [1253, 266, 'G0.3-0.5', '0-0-5', '5-5-0'], [1018, 304, 'G0.2-0.2', '5-3-3', '3-3-3'],
  [1068, 368, 'G1.3-0.8', '3-3-5', '3-6-8'], [1136, 368, 'G0.4-0.2', '10-0-4', '4-7-4'], [1227, 368, 'G0.2-0.2', '3-8-3', '3-3-3'],
  [1018, 382, 'G0.7-0.8', '3-3-6', '5-4-5'], [1181, 409, 'G1.2-0.2', '2-0-2', '0-6-0'], [971, 437, 'G1.5-0.5', '2-0-2', '2-2-2'],
  [930, 464, 'G1.3-0.7', '0-3-5', '4-4-4', 'V12.9-0.7'],
  [727, 503, 'G1.7-0.2', '0-4-4', '4-5-4'], [806, 503, 'G0.2-0.2', '4-2-6', '3-3-4'], [867, 528, 'G0.2-0.7', '5-0-0', '0-10-10'],
  [952, 528, 'G0.2-0.2', '6-8-5', '10-10-8'], [1013, 503, 'G0.2-0.2', '3-2-5', '5-3-4'], [1092, 503, 'G0.2-0.7', '4-4-0', '4-0-4'],
  [700, 569, 'G0.2-0.2', '5-5-5', '6-6-5'], [806, 569, 'G0.3-0.3', '4-2-3', '6-3-3'], [1013, 569, 'G0.3-0.3', '4-3-4', '0-4-4'],
  [1119, 569, 'G0.2-0.7', '6-6-6', '6-6-6'], [707, 631, 'G0.3-0.3', '8-5-5', '5-5-5'], [767, 631, 'G1.5-0.5', '6-4-4', '4-4-4'],
  [806, 631, 'G1.5-0.5', '6-8-4', '4-4-4'], [1013, 631, 'G0.3-0.5', '6-0-4', '4-4-4'], [1052, 631, 'G1.5-0.5', '4-4-6', '4-4-4'],
  [1112, 631, 'G0.3-0.3', '5-5-6', '5-5-5'], [878, 681, 'G0.4-0.3', '8-8-8', '4-17-21', 'VT1.5-0.1'], [942, 681, 'G0.4-0.3', '8-8-8', '20-18-4', 'VT1.5-0.1'],
  [794, 704, 'G1.5-0.5', '6-4-4', '3-4-4'], [1027, 704, 'G1.5-0.5', '4-4-8', '4-4-4'], [867, 718, 'G0.2-0.7', '2-0-7', '0-7-0'],
  [952, 718, 'G0.2-0.3', '7-8-2', '8-2-8'],
];

const up: Label[] = [
  [523, 260, 'G0.3-0.3', '7-7-7', '3-3-3'], [563, 240, 'G0.2-0.7', '3-0-2', '0-7-0'], [603, 198, 'G0.3-0.2', '5-5-5', '5-5-5'],
  [603, 260, 'G0.3-0.3', '6-6-5', '5-5-0'], [523, 306, 'G1.3-0.5', '2-2-2', '7-7-7'], [603, 306, 'G0.3-0.5', '5-0-0', '4-9-9'],
  [742, 198, 'G0.2-0.2', '5-5-5', '3-3-2'], [807, 215, 'G0.2-0.2', '4-4-1', '4-4-1'], [752, 295, 'G0.4-0.2', '8-4-4', '4-5-5'],
  [752, 349, 'G0.4-1.8', '11-4-4', '7-6-4'], [858, 295, 'G0.4-0.2', '5-2-2', '2-2-2'], [532, 401, 'G0.3-0.3', '5-2-2', '3-2-2', 'VT1.8-0.0'],
  [704, 408, 'G0.3-0.5', '3-4-4', '11-14-14', 'VT1.4-0.0'], [532, 449, 'G0.3-0.2', '3-3-3', '4-2-2'], [702, 448, 'G0.5-0.2', '8-3-7', '5-0-0'],
  [831, 449, 'G0.2-0.2', '3-3-3', '3-3-3'], [863, 449, 'G0.2-0.2', '3-3-3', '3-3-3'], [866, 364, 'G0.2-0.2', '3-2-2', '2-2-4'],
  [979, 216, 'G0.1-0.2', '4-4-0', '4-4-0'], [1043, 198, 'G0.3-0.3', '3-5-5', '2-3-3'], [1183, 198, 'G0.3-0.3', '5-5-5', '5-5-5'],
  [1223, 240, 'G0.2-0.2', '3-0-2', '0-7-0'], [1183, 260, 'G0.3-0.3', '6-6-5', '5-4-4'], [1263, 260, 'G0.3-0.3', '7-7-7', '3-3-3'],
  [927, 295, 'G0.2-0.2', '5-2-2', '3-3-3'], [1034, 295, 'G0.4-0.2', '8-4-4', '4-5-5'], [1183, 306, 'G1.3-0.5', '7-0-0', '4-8-8'],
  [1263, 306, 'G1.3-0.3', '7-2-2', '7-7-7'], [927, 340, 'G0.3-0.7', '2-2-2', '3-2-2'], [927, 398, 'G0.3-0.7', '2-2-2', '3-2-2'],
  [1034, 349, 'G0.4-1.8', '11-4-4', '7-6-4'], [1080, 406, 'G0.9-0.9', '7-6-2', '0-6-2', 'VT1.9-0.2'], [1263, 399, 'G0.6-0.6', '0-4-11', '2-5-2', 'VT1.8-0.2'],
  [941, 436, 'G1.7-0.7', '2-3-3', '3-3-3'], [941, 460, 'G0.2-0.2', '4-3-3', '3-3-3'], [982, 436, 'G0.5-0.5', '3-3-3', '3-3-3'],
  [899, 506, 'G0.2-0.2', '6-3-3', '4-4-4'], [816, 526, 'G1.5-1.1', '6-6-7', '8-4-4', 'VT2.5-0.4'], [697, 547, 'G0.3-0.3', '0-9-9', '5-5-5'],
  [777, 552, 'G1.3-0.3', '4-3-4', '4-4-4'], [816, 558, 'G1.5-0.5', '6-6-0', '6-7-7'], [711, 610, 'G0.3-0.3', '4-4-4', '4-4-4'],
  [816, 610, 'G0.3-0.3', '6-6-6', '6-6-6', 'VT1.8-0.8'], [899, 614, 'G1.5-0.7', '9-10-0', '0-10-5'], [984, 526, 'G1.5-1.1', '8-6-6', '4-4-7', 'VT2.5-0.4'],
  [984, 558, 'G1.5-0.5', '0-6-6', '6-6-6'], [1023, 552, 'G1.3-0.2', '4-3-4', '4-4-4'], [1103, 547, 'G0.2-0.2', '6-8-8', '5-5-5'],
  [984, 610, 'G0.3-0.3', '6-6-6', '6-5-5'], [1090, 610, 'G0.3-0.3', '4-4-4', '4-8-8'], [816, 712, 'G0.2-0.5-0.5', '6-5-5-5', '6-6-6-5'],
  [899, 709, 'G0.2-0.2', '4-3-3', '6-6-0'], [984, 712, 'G0.2-0.5-0.5', '6-5-5-5', '6-6-6-5'], [738, 720, 'G0.2-0.2', '5-5-5', '6-6-6'],
  [1062, 720, 'G0.3-0.3', '5-5-5', '6-6-6'],
];

const wallAcross: Label[] = [
  [539, 198, '2-2'], [539, 211, 'H0.8'], [607, 198, '2-2'], [607, 211, 'H0.8'], [743, 200, '0'], [743, 211, 'H0.8'], [758, 270, '0'], [758, 281, 'H0.8'],
  [811, 270, '2-2'], [811, 281, 'H0.8'], [540, 373, '2-2'], [539, 384, 'H0.8'], [619, 373, '2-2'], [619, 384, 'H0.8'], [819, 307, '5'], [820, 321, 'H0.9'],
  [861, 307, '7'], [861, 321, 'H0.9'], [818, 418, '6'], [818, 430, 'H0.8'], [858, 418, '2-2'], [858, 430, 'H0.8'], [849, 468, '0-0'], [849, 480, 'H0.8'],
  [1062, 198, '0'], [1062, 211, 'H0.8'], [1199, 198, '2-2'], [1199, 211, 'H0.8'], [1267, 198, '2-2'], [1267, 211, 'H0.8'], [996, 270, '2-2'], [995, 281, 'H0.8'],
  [1047, 270, '0'], [1047, 281, 'H0.8'], [965, 308, '9-6'], [965, 320, 'H1.0'], [965, 364, '0-0'], [965, 375, 'H1.0'], [965, 418, '4-0'], [965, 430, 'H1.0'],
  [1187, 373, '2-2'], [1187, 384, 'H0.8'], [1267, 373, '2-2'], [1267, 384, 'H0.8'], [973, 468, '0-0'], [973, 480, 'H1.0'], [767, 507, '3-3'], [767, 519, 'H0.9'],
  [1053, 507, '2-2'], [1053, 519, 'H0.9'], [746, 573, '0'], [746, 585, 'H0.8'], [1073, 573, '0'], [1073, 585, 'H0.8'], [734, 634, '0-0'], [734, 646, 'H0.8'],
  [1085, 634, '0-0'], [1085, 646, 'H0.8'], [835, 685, '2-2'], [836, 697, 'H0.8'], [983, 685, '2-2'], [984, 697, 'H0.8'], [754, 708, '1'], [755, 720, 'H0.8'],
  [1065, 708, '1'], [1066, 720, 'H0.8'],
];

const wallUp: Label[] = [
  [527, 225, '2-2'], [539, 225, 'H0.8'], [606, 225, '2-2'], [619, 225, 'H0.8'], [746, 240, '0-0'], [758, 240, 'H0.8'], [810, 257, '2-2'], [822, 257, 'H0.8'],
  [527, 358, '3-3'], [539, 358, 'H0.8'], [606, 358, '3-3'], [619, 358, 'H0.8'], [807, 369, '0-0'], [820, 369, 'H0.7'], [881, 419, 'H0.8'],
  [983, 258, '2-2'], [995, 258, 'H0.8'], [1047, 240, '0-0'], [1059, 240, 'H0.8'], [1186, 225, '2-2'], [1199, 225, 'H0.8'], [1266, 225, '2-2'], [1278, 225, 'H0.8'],
  [1186, 358, '2-2'], [1199, 358, 'H0.8'], [1266, 358, '2-2'], [1278, 358, 'H0.8'], [985, 369, '1-0'], [998, 369, 'H0.7'], [942, 318, 'H0.8'], [942, 369, 'H0.8'],
  [942, 418, 'H0.8'], [819, 493, '0-0'], [832, 493, 'H0.8'], [987, 493, '0-0'], [1000, 493, 'H0.8'], [780, 520, '2-2'], [792, 520, 'H0.8'], [1026, 520, '2-2'],
  [1039, 520, 'H0.8'], [819, 666, '2-2'], [832, 666, 'H0.8'], [987, 666, '2-2'], [1000, 666, 'H0.8'], [741, 677, '0-0'], [753, 677, 'H1.1'], [1065, 677, '0-0'], [1077, 677, 'H1.1'],
];

const columnText: Label[] = [
  [705, 371, '(0.53)'], [728, 366, '35'], [716, 383, '50'], [734, 394, 'G1.4-0.0'], [753, 371, '(0.54)'], [772, 366, '27'], [761, 383, '35'], [779, 397, 'G0.7-0.0'],
  [533, 465, '(0.48)'], [553, 461, '28'], [542, 475, '30'], [561, 482, 'G1.5-0.0'], [703, 465, '(0.47)'], [722, 461, '28'], [711, 475, '30'], [730, 482, 'G0.5-0.0'],
  [1034, 371, '(0.53)'], [1056, 366, '27'], [1044, 383, '35'], [1062, 397, 'G0.7-0.0'], [1080, 371, '(0.52)'], [1103, 366, '35'], [1090, 383, '50'], [1109, 394, 'G1.4-0.0'],
];

const notes = [
  '第 1 层(标准层1 底部加强区 外有边缘构件层) 混凝土构件配筋及钢构件应力比简图(单位:cm2)',
  '层高=5400(mm) 梁总数=139 柱总数=6 墙梁总数=1 墙柱总数=59',
  '混凝土强度等级: 梁Cb=C30,C40 柱Cc=C40 墙Cw=C40',
  '主筋强度: 梁FIB=360 柱FIC=360 墙FIW=360',
  '箍筋(分布筋)强度: 梁=360 柱=360 墙水平=270 墙竖向=300 边缘构件=270',
];

const Labels = ({ items, upright }: { items: Label[]; upright?: boolean }) => (
  <>
    {items.map(([x, y, ...lines]) =>
      lines.map((line, i) =>
        upright
          ? <text key={`${x}-${y}-${i}`} transform={`translate(${x + 2 + i * 6} ${y}) rotate(-90)`}>{line}</text>
          : <text key={`${x}-${y}-${i}`} x={x} y={y + 2 + i * 6}>{line}</text>
      )
    )}
  </>
);

function Drawing() {
  return (
    <main className="relative min-w-0 flex-1 overflow-hidden bg-[#212830]">
      <svg viewBox="0 131 1698 785" preserveAspectRatio="xMidYMin slice" className="absolute inset-0 size-full" role="img" aria-label="配筋简图">
        <g fill="none" shapeRendering="crispEdges" transform="translate(-0.5 -0.5)">
          <path d={teal} stroke="#007f7f" />
          <path d="M820 323L875 414M875 318L825 420M940 365L948 326L988 318M940 420L948 380L988 372M952 446L957 433L991 428" stroke="#9c9c9c" />
          <path d="M825 312H848M825 314H848M825 316H848" stroke="#000090" />
          <path d={cyan} stroke="#00ffff" />
          <path d={walls} stroke="#00ff00" />
          <path d="M839 422H873V414H877V426H839Z" stroke="#ff9a9a" />
          <path d={columns} stroke="#ffff00" />
          <path d="M866 312a2 2 0 1 0 4 0a2 2 0 1 0-4 0M935 312a2 2 0 1 0 4 0a2 2 0 1 0-4 0" stroke="#ff0000" />
        </g>
        <g textAnchor="middle" fontSize="6" fontWeight="700" fontFamily="Liberation Sans Narrow, Liberation Sans, sans-serif">
          <g fill="#008a00"><Labels items={wallAcross} /><Labels items={wallUp} upright /></g>
          <g fill="#ece4dc"><Labels items={across} /><Labels items={up} upright /></g>
          <g fill="#ffff00"><Labels items={columnText} /></g>
        </g>
        <g textAnchor="middle" fontFamily="Liberation Sans, Noto Sans CJK SC, sans-serif" fill="#efe8e0">
          {notes.map((note, i) => (
            <text key={note} x="903" y={840 + i * 19}>
              {note.split(/([\u4e00-\u9fff]+)/).map((part, j) => (
                <tspan key={j} fontSize={j % 2 ? (i === 0 ? 7 : 8) : 9}>{part}</tspan>
              ))}
            </text>
          ))}
        </g>
        <g fill="none" stroke="#c8c8c8" shapeRendering="crispEdges">
          <path d="M47.500 859V815M41.500 815.500h12L47.500 796zM54 865.500H98M97.500 859.500v12L117 865.500zM41.500 859.500h12v12h-12zM41 865.500h12M47.500 859v12" />
          <path d="M41 775l6 7 6-7M47.500 782v6M122 859l13 13M135 859l-13 13" shapeRendering="auto" />
        </g>
      </svg>
    </main>
  );
}

/* ---------- side panel ---------- */

const drawOptions = ['配筋', '配筋率', '梁主筋包络', '梁箍筋包络', '墙面外配筋', '次梁附加钢筋', '墙竖向分布筋配筋率'];

const PanelButton = ({ children, disabled, primary }: { children: string; disabled?: boolean; primary?: boolean }) => (
  <button
    disabled={disabled}
    className={`h-[22px] rounded-[3px] border text-center leading-5 whitespace-nowrap disabled:border-[#e6e6e6] disabled:bg-[#f8f8f8] disabled:text-[#9b9b9b] ${
      primary ? 'border-[#0078d4] bg-white' : 'border-[#cacaca] border-b-[#b4b4b4] bg-white'
    }`}
  >
    {children}
  </button>
);

const RatioRow = ({ id, label, value, indent }: { id: string; label: string; value: string; indent?: boolean }) => (
  <div className="flex h-[21px] items-center">
    <label htmlFor={id} className={`flex justify-between whitespace-nowrap ${indent ? 'ml-5 w-[41px] pt-1' : 'ml-[2px] w-[78px]'}`}>
      <span>{label}</span><span>&gt;</span>
    </label>
    <input id={id} disabled defaultValue={value} className={`h-[21px] w-10 border-2 border-[#f9f9f9] bg-[#f0f0f0] pb-1 pl-px text-[12px] text-[#7d7d7d] ${indent ? 'ml-[22px]' : 'ml-1'}`} />
    <span className="ml-1">显紫</span>
  </div>
);

function SidePanel() {
  const [selected, setSelected] = useState('配筋');
  return (
    <aside className="w-[197px] shrink-0 border-l border-[#3a3d40] bg-[#c6c6c6] pt-[3px] pb-[3px] pl-[2px] text-[12px] leading-[14px] text-black">
      <div className="flex h-full flex-col rounded-[3px] border border-[#555] bg-[#f0f0f0] pt-[13px] pl-[13px]">
        <fieldset className="w-[156px] border border-[#dcdcdc]">
          <legend className="ml-[5px] px-[2px]">绘图内容</legend>
          <div className="flex h-[171px] flex-col justify-between pl-[6px]">
            {drawOptions.map((o) => (
              <label key={o} className="flex h-6 items-center gap-[2px]">
                <input type="radio" name="content" checked={selected === o} onChange={() => setSelected(o)} className="size-[13px] shrink-0 appearance-none rounded-full border border-[#777] bg-[#f6f6f6] checked:border-4 checked:border-[#0062b8] checked:bg-white" />
                {o}
              </label>
            ))}
          </div>
        </fieldset>
        <fieldset className="mt-[7px] flex w-[156px] flex-col border border-[#dcdcdc] pb-[10px]">
          <legend className="ml-[5px] px-[2px]">梁主筋率(%)</legend>
          <div className="flex flex-col gap-[10px] pt-2">
            <RatioRow id="mid" label="梁中" value="2.50" indent />
            <RatioRow id="end" label="梁端" value="2.50" indent />
          </div>
        </fieldset>
        <div className="mt-[7px] flex flex-col gap-2">
          <RatioRow id="column" label="柱主筋率(%)" value="5.00" />
          <RatioRow id="wall" label="墙水平筋(%)" value="1.00" />
          <div className="flex h-[21px] w-[156px] items-center justify-between pl-1">
            <label htmlFor="level">梁标高(m)</label>
            <div className="relative">
              <select id="level" className="h-[21px] w-20 appearance-none border border-[#c4c4c4] bg-white pl-[3px] text-[12px]"><option>全部</option></select>
              <svg viewBox="0 0 10 6" className="pointer-events-none absolute top-2 right-1 h-[6px] w-[10px]"><path d="M1 1l4 4 4-4" fill="none" stroke="#555" /></svg>
            </div>
          </div>
        </div>
        <div className="mt-[11px] grid w-[155px] grid-cols-[66px_75px] justify-between gap-y-[7px] pl-px">
          <PanelButton>构件信息</PanelButton><PanelButton>配筋率查询</PanelButton>
          <PanelButton>墙柱轮廓</PanelButton><PanelButton>墙稳定验算</PanelButton>
          <PanelButton disabled>显示取大</PanelButton><PanelButton disabled>显示无对应</PanelButton>
          <PanelButton>围区统计</PanelButton><PanelButton>显示控制</PanelButton>
          <PanelButton>验算选项</PanelButton><PanelButton>梁柱验算</PanelButton>
        </div>
        <div className="mt-2 grid w-[155px] grid-cols-[54px_58px_42px] items-center gap-y-1 pl-px [&>button]:w-[42px]">
          <span>文字高度</span><PanelButton>增大</PanelButton><PanelButton>减小</PanelButton>
          <span className="text-[#9b9b9b]">最大幅值</span><PanelButton disabled>增大</PanelButton><PanelButton disabled>减小</PanelButton>
        </div>
        <div className="mt-[9px] grid w-[155px] grid-cols-[61px_61px] justify-between pl-1">
          <PanelButton primary>应用</PanelButton><PanelButton>关闭</PanelButton>
        </div>
      </div>
    </aside>
  );
}

/* ---------- command line and tool palette ---------- */

const palette = [
  'list', 'card', 'find', 'pictureWrench', 'layerMove', 'pictureCube', 'layersCard', 'layerBrush', 'cubeTop', 'cubeLeft', 'cubeFront',
  'house', 'orbit', 'pan', 'zoomAll', 'zoomWindow', 'ruler', 'rulerDiagonal', 'angle', 'textBigger', 'textSmaller', 'textStyle', 'wrench',
  'camera', 'fifty', 'pdf', 'dwg', 'move', 'eraser',
];

const Grip = ({ width }: { width: string }) => (
  <div className={`shrink-0 bg-[#9f9f9f] pt-[3px] pl-px ${width}`}>
    <div className="mr-[2px] h-[3px] border-y border-dotted border-[#333]" />
  </div>
);

function CommandArea() {
  return (
    <div className="flex h-[72px] shrink-0">
      <Grip width="w-[11px]" />
      <div className="relative flex w-[753px] shrink-0 flex-col bg-white text-[12px] text-[#1a1a1a]">
        <div className="flex h-[53px]">
          <div className="flex-1 pl-1 leading-[17px]">
            <p>第1层底图绘制完毕.</p><p>命令完成</p><p>命令:yjkdisplay_dspdrawmenu2</p>
          </div>
          <div className="w-4 bg-[#f0f0f0] pt-[19px]"><div className="mx-auto h-[17px] w-[2px] bg-[#858585]" /></div>
        </div>
        <div className="flex h-[19px] border-t border-[#9b9b94]">
          <input aria-label="命令" defaultValue="命令:yjks_csload" className="min-w-0 flex-1 pl-1 leading-[18px] outline-none" />
          <div className="flex w-16 items-center bg-[#f0f0f0] pl-[17px]"><div className="h-[3px] w-[17px] bg-[#858585]" /></div>
        </div>
        <div className="pointer-events-none absolute top-[46px] left-px h-[30px] w-[106px] border-4 border-[#fa0a0a]" />
      </div>
      <Grip width="w-[15px]" />
      <div className="flex min-w-0 flex-1 flex-col bg-[#f0f0f0] pt-[3px] pl-[2px]">
        <div className="flex">
          {palette.map((n) => <button key={n} aria-label={n} className="flex h-[34px] w-[38px] shrink-0 justify-center"><Icon name={n} /></button>)}
        </div>
        <div className="flex">
          {['viewA', 'viewB', 'viewC', 'viewA', 'ucs'].map((n, i) => (
            <button key={i} aria-label={n} className="flex h-[34px] w-[38px] shrink-0 justify-center"><Icon name={n} /></button>
          ))}
        </div>
      </div>
    </div>
  );
}

const modes = [
  <path key="snap" d="M5 5h10M5 8h10M5 11h10M5 14h10M5 17h10M17 4v14" stroke="#222" strokeDasharray="2 1" strokeWidth="1.200" />,
  <path key="grid" d="M4 4h14v14H4zM7.500 4v14M11 4v14M14.500 4v14M4 7.500h14M4 11h14M4 14.500h14" stroke="#222" fill="none" />,
  <path key="ortho" d="M5 4v14h13M5 13h5v5" stroke="#555" fill="none" />,
  <g key="polar" fill="none" stroke="#222" strokeWidth="1.200"><path d="M14 7a6 6 0 1 0 2 7M10 13h8M10 13l7-8M17 5v8" /></g>,
  <g key="osnap"><rect x="5.500" y="4.500" width="13" height="13" fill="#f3f6f8" stroke="#333" /><circle cx="5" cy="5" r="2" fill="#fff" stroke="#ef8a4c" /></g>,
  <path key="track" d="M16 4L6 17h12" stroke="#222" fill="none" strokeWidth="1.400" />,
  <g key="dyn" fill="none"><path d="M5 3v15h13M5 18L15 8" stroke="#222" /><path d="M15 3v8M11 7h8" stroke="#1c3fb5" strokeWidth="1.500" /></g>,
];

function StatusBar() {
  return (
    <footer className="flex h-[22px] shrink-0 items-stretch overflow-hidden border-t border-black bg-linear-to-b from-[#e4e4e4] to-[#c4c4c4] pt-px text-[12px]">
      <span className="w-[214px] pl-[7px] leading-[23px] text-black">56382.65,53848.15,0.00</span>
      {modes.map((m, i) => (
        <button key={i} aria-label={`模式${i + 1}`} className={`w-[22px] border-t border-l border-[#555] ${i === 4 || i === 5 ? 'bg-[#a5d3e4]' : ''}`}>
          <svg viewBox="0 0 22 22" className="h-5 w-[21px]">{m}</svg>
        </button>
      ))}
      <div className="w-px bg-[#555]" />
      <button aria-label="面板" className="ml-auto w-6 border border-b-0 border-[#444] pt-px">
        <svg viewBox="0 0 22 18" className="h-[18px] w-[22px]"><path d="M7.500 4.500h7v11h-7zM9 7.500h4M9 10h4M9 12.500h4M11 6v9" fill="#eee" stroke="#222" /></svg>
      </button>
      <input type="range" aria-label="缩放" defaultValue={0} className="mt-1 mr-2 ml-[19px] h-[14px] w-[120px] appearance-none border border-[#444] bg-[#dedede] [&::-webkit-slider-thumb]:h-[17px] [&::-webkit-slider-thumb]:w-2 [&::-webkit-slider-thumb]:appearance-none [&::-webkit-slider-thumb]:border [&::-webkit-slider-thumb]:border-[#444] [&::-webkit-slider-thumb]:bg-[#a8a8a8]" />
    </footer>
  );
}

export default function App() {
  return (
    <div className="flex h-screen flex-col overflow-hidden bg-[#212830] [font-family:'Noto_Sans','Noto_Sans_CJK_SC',sans-serif]">
      <svg className="absolute size-0" aria-hidden="true">
        <defs>
          <linearGradient id="paper" x2="1" y2="1"><stop stopColor="#fff" /><stop offset="1" stopColor="#e6ebf2" /></linearGradient>
          <linearGradient id="steel" x2="1" y2="1"><stop stopColor="#fff" /><stop offset="1" stopColor="#b9bfc7" /></linearGradient>
          <linearGradient id="steelDark" x2="1" y2="1"><stop stopColor="#8b939d" /><stop offset="0.5" stopColor="#dce1e6" /><stop offset="1" stopColor="#7d8792" /></linearGradient>
          <radialGradient id="lens"><stop stopColor="#f8fdff" /><stop offset="1" stopColor="#bfe0e6" /></radialGradient>
          <linearGradient id="arrowUp" x2="0" y2="1"><stop stopColor="#e9f9fd" /><stop offset="1" stopColor="#0b86cf" /></linearGradient>
          <linearGradient id="arrowDown" x2="0" y2="1"><stop stopColor="#1b8fd0" /><stop offset="1" stopColor="#d6f4fb" /></linearGradient>
          <pattern id="hatch" width="2" height="2" patternUnits="userSpaceOnUse"><rect width="2" height="2" fill="#ccd2d9" /><rect width="1" height="1" fill="#222" /><rect x="1" y="1" width="1" height="1" fill="#222" /></pattern>
        </defs>
      </svg>
      <TitleBar />
      <TabBar />
      <Ribbon />
      <div className="flex min-h-0 flex-1 border-t-2 border-[#4c4c50]">
        <Drawing />
        <SidePanel />
      </div>
      <div className="h-[10px] shrink-0 border-t-2 border-[#f2f2f2] bg-[#676767]" />
      <CommandArea />
      <StatusBar />
    </div>
  );
}
